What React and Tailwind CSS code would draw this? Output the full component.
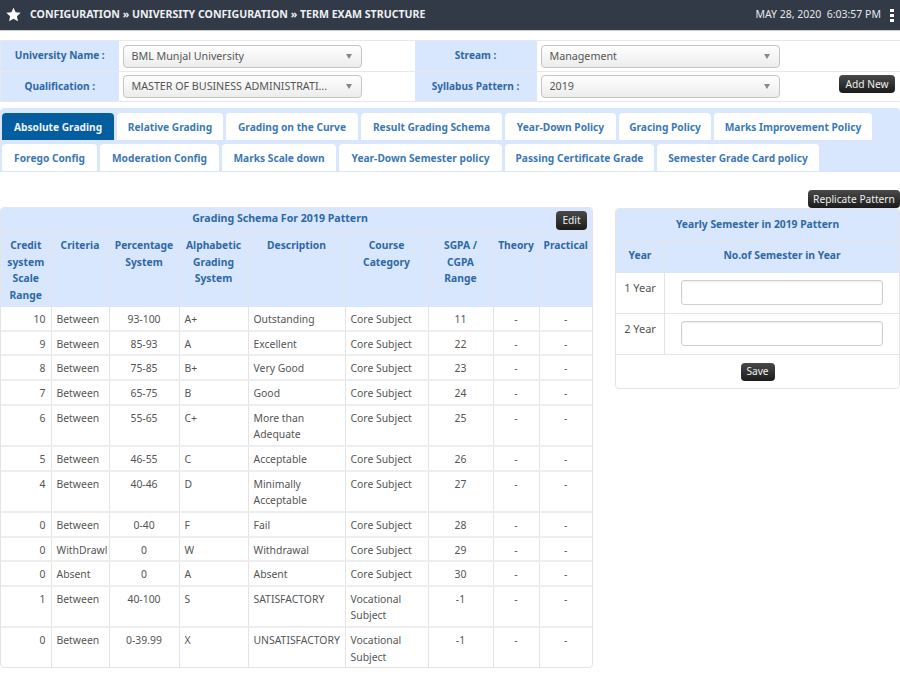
const FONT = "font-['Noto_Sans',sans-serif]";

const tabRows = [
  [
    { label: 'Absolute Grading', w: 'w-[112px]', active: true },
    { label: 'Relative Grading', w: 'w-[106px]' },
    { label: 'Grading on the Curve', w: 'w-[132px]' },
    { label: 'Result Grading Schema', w: 'w-[141px]' },
    { label: 'Year-Down Policy', w: 'w-[111px]' },
    { label: 'Gracing Policy', w: 'w-[92px]' },
    { label: 'Marks Improvement Policy', w: 'w-[158px]' },
  ],
  [
    { label: 'Forego Config', w: 'w-[95px]' },
    { label: 'Moderation Config', w: 'w-[119px]' },
    { label: 'Marks Scale down', w: 'w-[114px]' },
    { label: 'Year-Down Semester policy', w: 'w-[163px]' },
    { label: 'Passing Certificate Grade', w: 'w-[149px]' },
    { label: 'Semester Grade Card policy', w: 'w-[162px]' },
  ],
];

// scale, criteria, percent, grade, description, category, sgpa
const grades = [
  ['10', 'Between', '93-100', 'A+', 'Outstanding', 'Core Subject', '11'],
  ['9', 'Between', '85-93', 'A', 'Excellent', 'Core Subject', '22'],
  ['8', 'Between', '75-85', 'B+', 'Very Good', 'Core Subject', '23'],
  ['7', 'Between', '65-75', 'B', 'Good', 'Core Subject', '24'],
  ['6', 'Between', '55-65', 'C+', 'More than Adequate', 'Core Subject', '25'],
  ['5', 'Between', '46-55', 'C', 'Acceptable', 'Core Subject', '26'],
  ['4', 'Between', '40-46', 'D', 'Minimally Acceptable', 'Core Subject', '27'],
  ['0', 'Between', '0-40', 'F', 'Fail', 'Core Subject', '28'],
  ['0', 'WithDrawl', '0', 'W', 'Withdrawal', 'Core Subject', '29'],
  ['0', 'Absent', '0', 'A', 'Absent', 'Core Subject', '30'],
  ['1', 'Between', '40-100', 'S', 'SATISFACTORY', 'Vocational Subject', '-1'],
  ['0', 'Between', '0-39.99', 'X', 'UNSATISFACTORY', 'Vocational Subject', '-1'],
];

const heads = [
  'Credit system Scale Range',
  'Criteria',
  'Percentage System',
  'Alphabetic Grading System',
  'Description',
  'Course Category',
  'SGPA / CGPA Range',
  'Theory',
  'Practical',
];

function DarkButton({ children, className = '' }) {
  return (
    <button className={`rounded-[4px] bg-gradient-to-b from-[#4a4a4a] to-[#1c1c1c] text-[10.2px] font-normal leading-none text-[#f0f0f0] ${className}`}>
      {children}
    </button>
  );
}

function Select({ value }) {
  return (
    <div className="flex h-[23px] w-[239px] items-center justify-between rounded-[4px] border border-[#c4c4c4] bg-gradient-to-b from-white to-[#ececec] pl-2 pr-[9px] text-[10.7px] text-[#555]">
      <span className="truncate">{value}</span>
      <span className="ml-2 h-0 w-0 shrink-0 border-x-[3.5px] border-t-[5px] border-x-transparent border-t-[#888]" />
    </div>
  );
}

function Label({ children }) {
  return <td className="bg-[#d8e7fd] text-center text-[10.1px] font-bold text-[#2f68a6]">{children}</td>;
}

function App() {
  return (
    <div className={`h-[679px] w-[900px] overflow-hidden bg-white ${FONT}`}>
      {/* top bar */}
      <header className="flex h-[31px] items-center justify-between border-b border-[#c9ccd1] bg-[#323a48] pl-[6px] pr-[6px]">
        <div className="flex items-center gap-[9px]">
          <svg width="15" height="15" viewBox="0 0 24 24" fill="white">
            <polygon points="12,1 15.4,8.3 23.5,9.2 17.5,14.7 19.1,22.7 12,18.7 4.9,22.7 6.5,14.7 0.5,9.2 8.6,8.3" />
          </svg>
          <span className="text-[10.6px] font-bold text-[#eef0f3]">
            CONFIGURATION » UNIVERSITY CONFIGURATION » TERM EXAM STRUCTURE
          </span>
        </div>
        <div className="flex items-center gap-[9px]">
          <span className="text-[10.5px] text-[#e6e8eb]">MAY 28, 2020&nbsp;&nbsp;6:03:57 PM</span>
          <span className="flex flex-col gap-[2px]">
            <i className="block h-[3px] w-[4px] bg-white" />
            <i className="block h-[3px] w-[4px] bg-white" />
            <i className="block h-[3px] w-[4px] bg-white" />
          </span>
        </div>
      </header>

      {/* filters */}
      <div className="pt-[9px]">
        <table className="w-[900px] table-fixed border-collapse border border-[#e8e8e8]">
          <colgroup>
            <col className="w-[118px]" />
            <col className="w-[296px]" />
            <col className="w-[122px]" />
            <col className="w-[364px]" />
          </colgroup>
          <tbody>
            <tr className="h-[31px] border-b border-[#e8e8e8]">
              <Label>University Name :</Label>
              <td className="pl-[4px]"><Select value="BML Munjal University" /></td>
              <Label>Stream :</Label>
              <td className="pl-[4px]"><Select value="Management" /></td>
            </tr>
            <tr className="h-[30px]">
              <Label>Qualification :</Label>
              <td className="pl-[4px]"><Select value="MASTER OF BUSINESS ADMINISTRATI..." /></td>
              <Label>Syllabus Pattern :</Label>
              <td className="pl-[4px]">
                <div className="flex items-start justify-between pr-[5px]">
                  <Select value="2019" />
                  <DarkButton className="h-[18px] w-[56px]">Add New</DarkButton>
                </div>
              </td>
            </tr>
          </tbody>
        </table>
      </div>

      {/* tabs */}
      <nav className="mt-[6px] flex h-[64px] flex-col gap-[4px] rounded-t-[4px] bg-[#d8e7fd] px-[2px] pt-[5px]">
        {tabRows.map((row, i) => (
          <div key={i} className="flex gap-[3px]">
            {row.map((tab) => (
              <div
                key={tab.label}
                className={`flex h-[27px] items-center justify-center whitespace-nowrap rounded-t-[4px] pt-[2px] text-[10.2px] font-bold ${tab.w} ${
                  tab.active ? 'bg-[#045d9f] text-[#eef4fb]' : 'bg-white text-[#3b78b8]'
                }`}
              >
                {tab.label}
              </div>
            ))}
          </div>
        ))}
      </nav>

      <div className="flex justify-end pt-[18px]">
        <DarkButton className="h-[18px] w-[92px]">Replicate Pattern</DarkButton>
      </div>

      <div className="flex items-start justify-between">
        {/* grading schema */}
        <div className="-mt-px w-[593px] overflow-hidden rounded-[4px] border border-[#e4e4e4]">
          <div className="relative flex h-[25px] items-center justify-center border-b border-[#e4e4e4] bg-[#d8e7fd] pb-[2px] pr-[33px] text-[10.6px] font-bold text-[#2f68a6]">
            Grading Schema For 2019 Pattern
            <DarkButton className="absolute right-[5px] top-[3px] h-[19px] w-[31px]">Edit</DarkButton>
          </div>
          <table className="w-full table-fixed border-collapse text-[10.4px] leading-[16.5px]">
            <colgroup>
              <col className="w-[50px]" />
              <col className="w-[58px]" />
              <col className="w-[70px]" />
              <col className="w-[69px]" />
              <col className="w-[97px]" />
              <col className="w-[83px]" />
              <col className="w-[65px]" />
              <col className="w-[46px]" />
              <col />
            </colgroup>
            <thead>
              <tr className="h-[74px] bg-[#d8e7fd]">
                {heads.map((h) => (
                  <th key={h} className="border-x border-[#e4e4e4] px-[3px] pt-[4px] align-top text-[10.3px] font-bold text-[#2f68a6] first:border-l-0 last:border-r-0">
                    {h}
                  </th>
                ))}
              </tr>
            </thead>
            <tbody className="text-[#555]">
              {grades.map((g, i) => (
                <tr key={i} className="border-t-2 border-[#eeeeee] first:border-t-0">
                  <td className="border-r border-[#e4e4e4] px-[5px] pb-[2.2px] pt-[4px] text-right align-top">{g[0]}</td>
                  <td className="border-r border-[#e4e4e4] px-[5px] pb-[2.2px] pt-[4px] align-top">{g[1]}</td>
                  <td className="border-r border-[#e4e4e4] px-[5px] pb-[2.2px] pt-[4px] text-center align-top">{g[2]}</td>
                  <td className="border-r border-[#e4e4e4] px-[5px] pb-[2.2px] pt-[4px] align-top">{g[3]}</td>
                  <td className="border-r border-[#e4e4e4] px-[5px] pb-[2.2px] pt-[4px] align-top">{g[4]}</td>
                  <td className="border-r border-[#e4e4e4] px-[5px] pb-[2.2px] pt-[4px] align-top">{g[5]}</td>
                  <td className="border-r border-[#e4e4e4] px-[5px] pb-[2.2px] pt-[4px] text-center align-top">{g[6]}</td>
                  <td className="border-r border-[#e4e4e4] px-[5px] pb-[2.2px] pt-[4px] text-center align-top">-</td>
                  <td className="px-[5px] pb-[2.2px] pt-[4px] text-center align-top">-</td>
                </tr>
              ))}
            </tbody>
          </table>
        </div>

        {/* yearly semester */}
        <div className="w-[285px] overflow-hidden rounded-[4px] border border-[#e4e4e4] text-[10.3px]">
          <div className="flex h-[32px] items-center justify-center border-b border-[#e4e4e4] bg-[#d8e7fd] font-bold text-[#2f68a6]">
            Yearly Semester in 2019 Pattern
          </div>
          <div className="flex h-[32px] bg-[#d8e7fd] font-bold text-[#2f68a6]">
            <div className="flex w-[49px] items-center justify-center border-r border-[#e4e4e4] pb-[2px]">Year</div>
            <div className="flex flex-1 items-center justify-center pb-[2px]">No.of Semester in Year</div>
          </div>
          {['1 Year', '2 Year'].map((y) => (
            <div key={y} className="flex h-[41px] border-b border-[#e4e4e4] text-[11px] text-[#555]">
              <div className="w-[49px] border-r border-[#e4e4e4] pt-[7px] text-center">{y}</div>
              <div className="flex flex-1 items-center justify-center pb-[1px]">
                <input className="h-[25px] w-[202px] rounded-[3px] border border-[#cfcfcf] bg-white shadow-[inset_0_1px_2px_rgba(0,0,0,0.08)]" />
              </div>
            </div>
          ))}
          <div className="flex h-[33px] items-center justify-center">
            <DarkButton className="h-[18px] w-[34px]">Save</DarkButton>
          </div>
        </div>
      </div>
    </div>
  );
}

export default App;
